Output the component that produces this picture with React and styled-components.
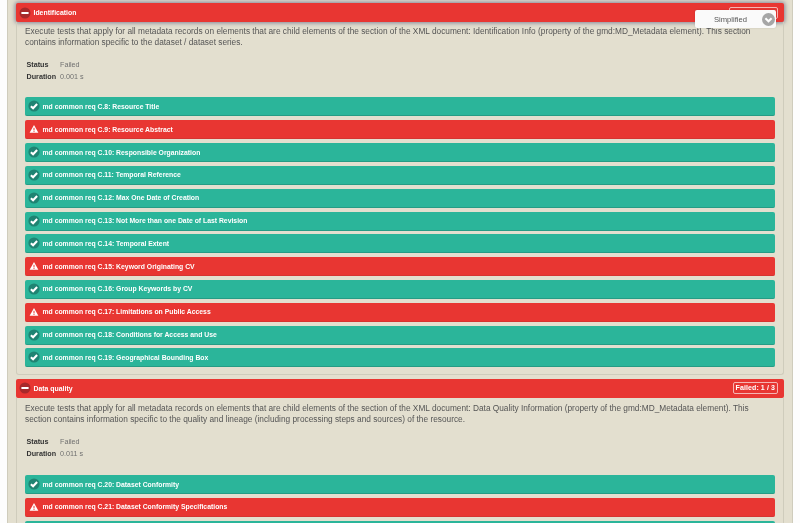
import React from "react";
import styled, { createGlobalStyle } from "styled-components";

const Global = createGlobalStyle`
  html, body { margin: 0; padding: 0; height: 523px; overflow: hidden; background: #fdfdfd; }
  body { font-family: "Liberation Sans", Arial, sans-serif; }
`;

const Page = styled.div`
  height: 523px;
  overflow: hidden;
  padding: 0 7px;
  position: relative;
  filter: blur(0.3px);
`;
const Panel = styled.div`
  background: #e3dfcf;
  border-left: 1px solid #cfccbc;
  border-right: 1px solid #cfccbc;
  padding: 3px 8px 0;
  height: 540px;
`;
const Section = styled.section`
  margin-bottom: 3.2px;
`;
const Header = styled.div`
  height: 19px;
  box-sizing: border-box;
  background: #e83632;
  border-radius: 2px;
  display: flex;
  align-items: center;
  padding: 0 6px 0 3px;
  color: #fff;
  font-size: 6.9px;
  font-weight: 700;
  box-shadow: ${(p) => (p.$raised ? "0 0 4px 1px rgba(70,70,110,.6)" : "none")};
`;
const HeaderTitle = styled.span`
  flex: 1;
`;
const Badge = styled.span`
  border: 1px solid #f5b5b3;
  border-radius: 2px;
  padding: 1px 2px;
  font-size: 7px;
  line-height: 8px;
  letter-spacing: .1px;
`;
const Body = styled.div`
  border: 1px solid #cfccbc;
  border-top: none;
  border-radius: 0 0 3px 3px;
  padding: ${(p) => (p.$loose ? "5px" : "4px")} 8px 7px;
  color: #555;
`;
const Description = styled.p`
  margin: 0;
  font-size: 8.3px;
  line-height: 11.3px;
`;
const Meta = styled.div`
  display: grid;
  grid-template-columns: 33.5px auto;
  justify-content: start;
  margin: 10.4px 0 ${(p) => (p.$loose ? "15.5px" : "14.5px")} 1.5px;
  font-size: 7.2px;
  line-height: 12px;
`;
const MetaKey = styled.span`
  font-weight: 700;
  color: #333;
`;
const MetaValue = styled.span`
  color: #707070;
`;
const Rows = styled.div`
  display: flex;
  flex-direction: column;
  gap: 3.82px;
`;
const Row = styled.div`
  height: 19px;
  flex: none;
  box-sizing: border-box;
  border-radius: 2px;
  background: ${(p) => (p.$fail ? "#e83632" : "#2bb59a")};
  border-bottom: 1px solid ${(p) => (p.$fail ? "#d63431" : "#259c85")};
  display: flex;
  align-items: center;
  padding-left: 3px;
  color: #fff;
  font-size: 6.83px;
  font-weight: 700;
`;
const RowIcon = styled.svg`
  width: 12px;
  height: 12px;
  flex: none;
  margin-right: 2.5px;
`;
const Switcher = styled.div`
  position: absolute;
  left: 695px;
  top: 10px;
  width: 81px;
  height: 18px;
  box-sizing: border-box;
  background: #fafafa;
  border-radius: 2px;
  box-shadow: 0 0 2px rgba(0,0,0,.15);
  display: flex;
  align-items: center;
  padding-left: 19px;
  color: #555;
  font-size: 7.6px;
`;
const SwitcherLabel = styled.span`
  flex: 1;
`;
const Chevron = styled.svg`
  width: 13px;
  height: 13px;
  margin-right: 1px;
`;

const MinusIcon = () => (
  <RowIcon viewBox="0 0 12 12">
    <circle cx="6" cy="6" r="5.5" fill="#a8292a" />
    <rect x="2.4" y="4.9" width="7.2" height="2.2" rx=".5" fill="#fff" />
  </RowIcon>
);
const CheckIcon = () => (
  <RowIcon viewBox="0 0 12 12">
    <circle cx="6" cy="6" r="5.6" fill="#1f8372" />
    <path d="M2.9 6.2 5.1 8.3 9.1 4" fill="none" stroke="#fff" strokeWidth="2.1" />
  </RowIcon>
);
const WarnIcon = () => (
  <RowIcon viewBox="0 0 12 12">
    <path d="M6 2 10.4 9.8H1.6Z" fill="#fff" />
    <rect x="5.5" y="4.8" width="1" height="2.6" fill="#e83632" />
    <rect x="5.5" y="7.9" width="1" height="1" fill="#e83632" />
  </RowIcon>
);

const sections = [
  {
    title: "Identification",
    raised: true,
    badge: "Failed: 5 / 12",
    text: "Execute tests that apply for all metadata records on elements that are child elements of the section of the XML document: Identification Info (property of the gmd:MD_Metadata element). This section contains information specific to the dataset / dataset series.",
    duration: "0.001 s",
    rows: [
      ["md common req C.8: Resource Title"],
      ["md common req C.9: Resource Abstract", true],
      ["md common req C.10: Responsible Organization"],
      ["md common req C.11: Temporal Reference"],
      ["md common req C.12: Max One Date of Creation"],
      ["md common req C.13: Not More than one Date of Last Revision"],
      ["md common req C.14: Temporal Extent"],
      ["md common req C.15: Keyword Originating CV", true],
      ["md common req C.16: Group Keywords by CV"],
      ["md common req C.17: Limitations on Public Access", true],
      ["md common req C.18: Conditions for Access and Use"],
      ["md common req C.19: Geographical Bounding Box"],
    ],
  },
  {
    title: "Data quality",
    loose: true,
    badge: "Failed: 1 / 3",
    text: "Execute tests that apply for all metadata records on elements that are child elements of the section of the XML document: Data Quality Information (property of the gmd:MD_Metadata element). This section contains information specific to the quality and lineage (including processing steps and sources) of the resource.",
    duration: "0.011 s",
    rows: [
      ["md common req C.20: Dataset Conformity"],
      ["md common req C.21: Dataset Conformity Specifications", true],
      [""],
    ],
  },
];

export default function App() {
  return (
    <Page>
      <Global />
      <Panel>
        {sections.map((s) => (
          <Section key={s.title}>
            <Header $raised={s.raised}>
              <MinusIcon />
              <HeaderTitle>{s.title}</HeaderTitle>
              <Badge>{s.badge}</Badge>
            </Header>
            <Body $loose={s.loose}>
              <Description>{s.text}</Description>
              <Meta $loose={s.loose}>
                <MetaKey>Status</MetaKey>
                <MetaValue>Failed</MetaValue>
                <MetaKey>Duration</MetaKey>
                <MetaValue>{s.duration}</MetaValue>
              </Meta>
              <Rows>
                {s.rows.map(([label, fail]) => (
                  <Row key={label} $fail={fail}>
                    {label && (fail ? <WarnIcon /> : <CheckIcon />)}
                    {label}
                  </Row>
                ))}
              </Rows>
            </Body>
          </Section>
        ))}
      </Panel>
      <Switcher>
        <SwitcherLabel>Simplified</SwitcherLabel>
        <Chevron viewBox="0 0 13 13">
          <circle cx="6.5" cy="6.5" r="6.5" fill="#a6a6a6" />
          <path d="M3.4 5.2 6.5 8.3 9.6 5.2" fill="none" stroke="#fff" strokeWidth="2" />
        </Chevron>
      </Switcher>
    </Page>
  );
}
